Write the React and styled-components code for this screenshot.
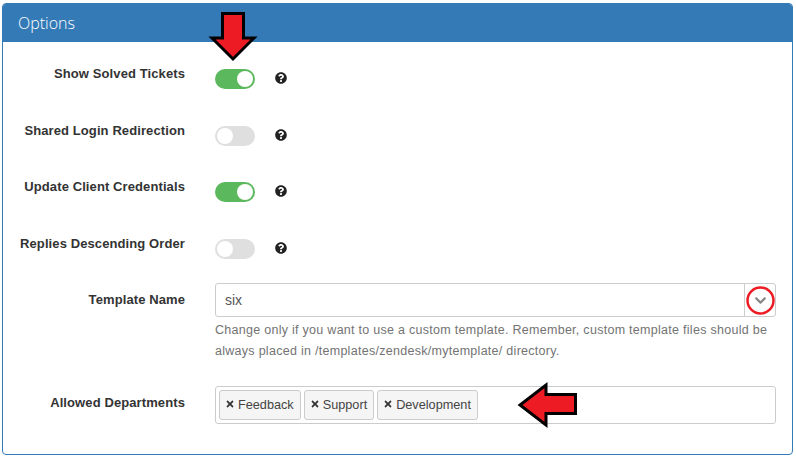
import React from "react";
import styled, { createGlobalStyle } from "styled-components";
import { FaQuestionCircle, FaTimes } from "react-icons/fa";
import { FiChevronDown } from "react-icons/fi";

const Global = createGlobalStyle`
    html, body {
        margin: 0;
        padding: 0;
        background: #fff;
    }
    body {
        font-family: "Liberation Sans", Arial, sans-serif;
        color: #333;
    }
`;

const Page = styled.div`
    position: relative;
    width: 796px;
    height: 458px;
    padding: 3px 3px 0 2px;
    box-sizing: border-box;
    overflow: hidden;
`;

const Panel = styled.div`
    height: 452px;
    box-sizing: border-box;
    border: 1px solid #337ab7;
    border-radius: 4px;
    overflow: hidden;
`;

const Heading = styled.div`
    height: 38px;
    background: #337ab7;
    color: #fff;
    font-family: "Open Sans", sans-serif;
    font-size: 16px;
    font-weight: 300;
    line-height: 38px;
    padding-left: 15px;
`;

const Body = styled.div`
    padding-top: 24px;
`;

const Row = styled.div`
    display: grid;
    grid-template-columns: 182px 1fr;
    column-gap: 30px;
    height: ${(p) => p.$height}px;
    padding-right: 16px;
`;

const Label = styled.div`
    text-align: right;
    font-size: 13px;
    font-weight: bold;
    letter-spacing: 0.1px;
    line-height: 15px;
    color: #333;
    padding-top: ${(p) => p.$top}px;
`;

const ToggleCell = styled.div`
    display: flex;
    align-items: flex-start;
    gap: 20px;
    padding-top: 3px;
`;

const Track = styled.div`
    width: 40px;
    height: 20px;
    border-radius: 10px;
    background: ${(p) => (p.$on ? "#5cb85c" : "#dfdfdf")};
    display: flex;
    justify-content: ${(p) => (p.$on ? "flex-end" : "flex-start")};
    padding: 2px;
    box-sizing: border-box;
`;

const Knob = styled.div`
    width: 16px;
    height: 16px;
    border-radius: 50%;
    background: #fff;
`;

const Help = styled.span`
    display: flex;
    margin-top: 3px;
    font-size: 12px;
    color: #222;
`;

const Field = styled.div`
    display: flex;
    flex-direction: column;
`;

const Select = styled.div`
    height: 34px;
    box-sizing: border-box;
    border: 1px solid #ccc;
    border-radius: 3px;
    display: flex;
    align-items: center;
    font-size: 14px;
    color: #555;
`;

const SelectValue = styled.div`
    flex: 1;
    padding-left: 9px;
`;

const Caret = styled.div`
    width: 30px;
    height: 100%;
    border-left: 1px solid #ccc;
    display: flex;
    align-items: center;
    justify-content: center;
    color: #888;
    font-size: 17px;
`;

const HelpText = styled.p`
    margin: 3px 0 0;
    font-size: 12.5px;
    letter-spacing: 0.28px;
    line-height: 21px;
    color: #737373;
`;

const TagBox = styled.div`
    height: 38px;
    box-sizing: border-box;
    border: 1px solid #ccc;
    border-radius: 3px;
    display: flex;
    align-items: center;
    gap: 3px;
    padding-left: 3px;
`;

const Tag = styled.div`
    height: 30px;
    box-sizing: border-box;
    border: 1px solid #ccc;
    border-radius: 3px;
    background: #f5f5f5;
    display: flex;
    align-items: center;
    gap: 3px;
    padding: 0 6px 0 5px;
    font-size: 12.7px;
    color: #444;
`;

const TagIcon = styled.span`
    display: flex;
    font-size: 10px;
    color: #333;
    margin-top: -2px;
`;

const Marker = styled.svg`
    position: absolute;
    left: ${(p) => p.$x}px;
    top: ${(p) => p.$y}px;
    overflow: visible;
`;

const toggles = [
    { label: "Show Solved Tickets", on: true, height: 56.5 },
    { label: "Shared Login Redirection", on: false, height: 56.5 },
    { label: "Update Client Credentials", on: true, height: 56.5 },
    { label: "Replies Descending Order", on: false, height: 47.5 },
];

const departments = ["Feedback", "Support", "Development"];

const App = () => {
    return (
        <Page>
            <Global />
            <Panel>
                <Heading>Options</Heading>
                <Body>
                    {toggles.map((t) => (
                        <Row key={t.label} $height={t.height}>
                            <Label $top={0}>{t.label}</Label>
                            <ToggleCell>
                                <Track $on={t.on}>
                                    <Knob />
                                </Track>
                                <Help>
                                    <FaQuestionCircle />
                                </Help>
                            </ToggleCell>
                        </Row>
                    ))}
                    <Row $height={103}>
                        <Label $top={9}>Template Name</Label>
                        <Field>
                            <Select>
                                <SelectValue>six</SelectValue>
                                <Caret>
                                    <FiChevronDown strokeWidth={3} />
                                </Caret>
                            </Select>
                            <HelpText>
                                Change only if you want to use a custom template. Remember, custom template files should be
                                always placed in /templates/zendesk/mytemplate/ directory.
                            </HelpText>
                        </Field>
                    </Row>
                    <Row $height={38}>
                        <Label $top={9}>Allowed Departments</Label>
                        <TagBox>
                            {departments.map((d) => (
                                <Tag key={d}>
                                    <TagIcon>
                                        <FaTimes />
                                    </TagIcon>
                                    {d}
                                </Tag>
                            ))}
                        </TagBox>
                    </Row>
                </Body>
            </Panel>
            <Marker $x={210} $y={14} width="48" height="48" viewBox="0 0 48 48">
                <path d="M12.5 -0.5 H33.5 V24 H44 L23 45 L2 24 H12.5 Z" fill="#ed1c24" stroke="#000" strokeWidth="3" />
            </Marker>
            <Marker $x={517} $y={384} width="60" height="42" viewBox="0 0 60 42">
                <path d="M58.5 10.5 V29.5 H29 V41 L3 21 L29 1 V10.5 Z" fill="#ed1c24" stroke="#000" strokeWidth="3" />
            </Marker>
            <Marker $x={745} $y={286} width="30" height="30" viewBox="0 0 30 30">
                <circle cx="15.5" cy="14.5" r="13" fill="none" stroke="#ed1c24" strokeWidth="2.5" />
            </Marker>
        </Page>
    );
};

export default App;
